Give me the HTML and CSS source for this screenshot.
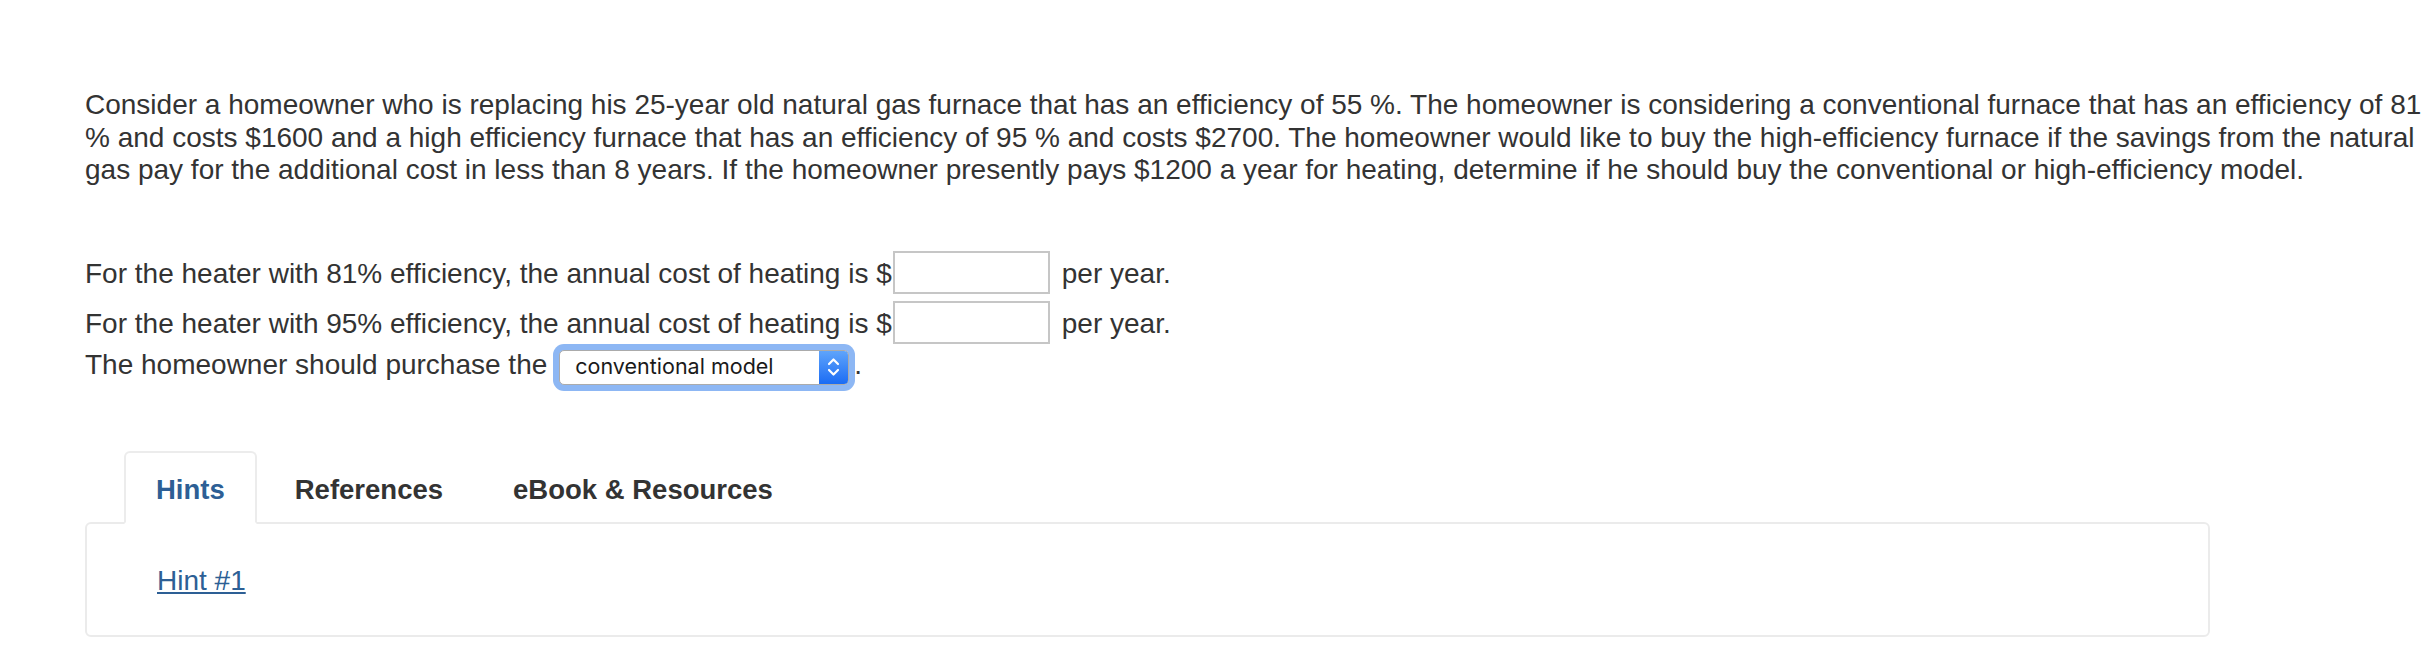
FILE: index.html
```html
<!DOCTYPE html>
<html lang="en">
<head>
<meta charset="utf-8">
<title>Furnace efficiency question</title>
<link rel="stylesheet" href="styles.css">
</head>
<body>
<div class="page">
  <p class="question">Consider a homeowner who is replacing his 25-year old natural gas furnace that has an efficiency of 55 %. The homeowner is considering a conventional furnace that has an efficiency of 81 % and costs $1600 and a high efficiency furnace that has an efficiency of 95 % and costs $2700. The homeowner would like to buy the high-efficiency furnace if the savings from the natural gas pay for the additional cost in less than 8 years. If the homeowner presently pays $1200 a year for heating, determine if he should buy the conventional or high-efficiency model.</p>

  <div class="answers">
    <div class="row">
      <span class="label">For the heater with 81% efficiency, the annual cost of heating is $</span>
      <input class="num" type="text" aria-label="annual cost 81%">
      <span class="label">per year.</span>
    </div>
    <div class="row">
      <span class="label">For the heater with 95% efficiency, the annual cost of heating is $</span>
      <input class="num" type="text" aria-label="annual cost 95%">
      <span class="label">per year.</span>
    </div>
    <div class="row row-select">
      <span>The homeowner should purchase the</span>
      <div class="select">
        <span class="select-text">conventional model</span>
        <span class="select-arrow">
          <svg width="29" height="32" viewBox="0 0 29 32" aria-hidden="true">
            <polyline points="10,13 14.5,8.5 19,13" fill="none" stroke="#fff" stroke-width="2.2" stroke-linecap="round" stroke-linejoin="round"/>
            <polyline points="10,19 14.5,23.5 19,19" fill="none" stroke="#fff" stroke-width="2.2" stroke-linecap="round" stroke-linejoin="round"/>
          </svg>
        </span>
      </div>
      <span>.</span>
    </div>
  </div>

  <div class="tabs">
    <div class="tab active">Hints</div>
    <div class="tab">References</div>
    <div class="tab">eBook &amp; Resources</div>
  </div>
  <div class="panel">
    <a class="hint-link" href="#">Hint #1</a>
  </div>
</div>
</body>
</html>
```

FILE: styles.css
```css
html, body {
  margin: 0;
  padding: 0;
  background: #fff;
}

body {
  font-family: "Liberation Sans", Arial, Helvetica, sans-serif;
  color: #333;
  font-size: 28px;
  line-height: 32.5px;
}

.page {
  padding: 89px 0 0 85px;
}

.question {
  margin: 0;
  width: 2343px;
}

.answers {
  margin-top: 64px;
}

.row {
  display: flex;
  align-items: center;
  height: 43px;
  white-space: nowrap;
}

.row + .row {
  margin-top: 7px;
}

.label {
  padding-top: 5px;
}

.num {
  width: 157px;
  height: 43px;
  box-sizing: border-box;
  border: 2px solid #c6c6c6;
  margin: 0 12px 0 1px;
  padding: 0 8px;
  font: inherit;
  background: #fff;
  outline: none;
}

.row.row-select {
  align-items: baseline;
  height: auto;
  margin-top: 5px;
}

.select {
  display: inline-flex;
  align-items: center;
  width: 290px;
  height: 35px;
  box-sizing: border-box;
  border: 1px solid #ababab;
  border-radius: 5px;
  margin: 0 5px 0 12px;
  background: #fff;
  box-shadow: 0 0 0 6px #8db7f4;
  font-family: Inter, "Noto Sans", sans-serif;
  font-size: 21.5px;
  line-height: 26px;
  color: #1a1a1a;
  overflow: hidden;
}

.select-text {
  flex: 1;
  padding: 0 0 3px 15px;
}

.select-arrow {
  align-self: stretch;
  width: 29px;
  display: flex;
  align-items: center;
  justify-content: center;
  background: linear-gradient(#5fa4fb, #1b6cf4);
}

.tabs {
  display: flex;
  margin: 66px 0 -2px 39px;
}

.tab {
  position: relative;
  font-size: 27.5px;
  font-weight: bold;
  line-height: 32px;
  padding: 21px 30px 16px;
  border: 2px solid transparent;
  border-radius: 6px 6px 0 0;
  margin-right: 6px;
  color: #333;
}

.tab.active {
  color: #2d5f95;
  border-color: #ececec;
  border-bottom-color: #fff;
  background: #fff;
}

.panel {
  width: 2125px;
  box-sizing: border-box;
  border: 2px solid #ebebeb;
  border-radius: 6px;
  padding: 41px 70px 38px;
}

.hint-link {
  color: #2d5f95;
  text-decoration: underline;
}
```
